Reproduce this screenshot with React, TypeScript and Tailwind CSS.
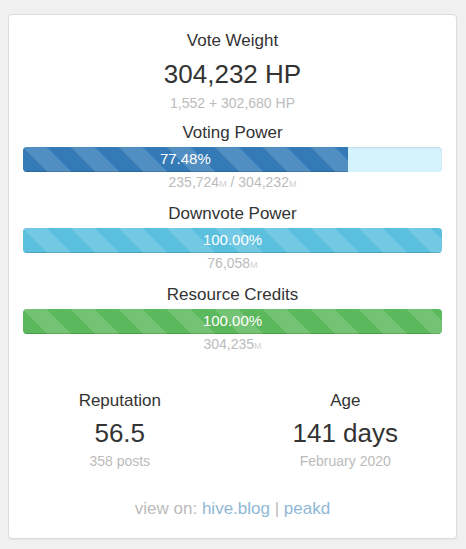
import React from "react";

const stripe =
  "linear-gradient(45deg, rgba(255,255,255,.15) 25%, transparent 25%, transparent 50%, rgba(255,255,255,.15) 50%, rgba(255,255,255,.15) 75%, transparent 75%, transparent)";

function Bar({ pct, label, color }: { pct: number; label: string; color: string }) {
  return (
    <div className="relative h-[25px] w-full overflow-hidden rounded-[4px] bg-[#d5f3fc] shadow-[inset_0_1px_2px_rgba(0,0,0,0.1)]">
      <div
        className={`flex h-full items-center justify-center text-[15px] text-white shadow-[inset_0_-1px_0_rgba(0,0,0,0.15)] ${color}`}
        style={{ width: `${pct}%`, backgroundImage: stripe, backgroundSize: "48px 48px" }}
      >
        {label}
      </div>
    </div>
  );
}

function M() {
  return <span className="text-[9px] text-[#cfcfcf]">M</span>;
}

function Section({
  title,
  pct,
  label,
  color,
  children,
}: {
  title: string;
  pct: number;
  label: string;
  color: string;
  children: React.ReactNode;
}) {
  return (
    <div className="flex flex-col items-center">
      <div className="h-[24px] text-[17px] leading-[24px] text-[#333]">{title}</div>
      <div className="mt-[2px] w-full">
        <Bar pct={pct} label={label} color={color} />
      </div>
      <div className="h-[20px] text-[14px] leading-[20px] text-[#bbb]">{children}</div>
    </div>
  );
}

export default function App() {
  return (
    <div
      className="min-h-[549px] w-[466px] bg-[#f0f0f0] pt-[14px]"
      style={{ fontFamily: '"Liberation Sans", Arial, Helvetica, sans-serif' }}
    >
      <div className="mx-[8px] h-[525px] w-[449px] rounded-[4px] border border-[#dcdcdc] bg-white px-[14px] pt-[14px] shadow-[0_1px_1px_rgba(0,0,0,0.05)]">
        <div className="flex flex-col items-center">
          <div className="h-[24px] text-[17px] leading-[24px] text-[#333]">Vote Weight</div>
          <div className="mt-[3px] h-[37px] text-[26px] leading-[37px] text-[#333]">304,232 HP</div>
          <div className="h-[20px] text-[14px] leading-[20px] text-[#bbb]">1,552 + 302,680 HP</div>
        </div>

        <div className="mt-[8px] flex flex-col gap-[10px]">
          <Section title="Voting Power" pct={77.48} label="77.48%" color="bg-[#337ab7]">
            235,724
            <M /> / 304,232
            <M />
          </Section>
          <Section title="Downvote Power" pct={100} label="100.00%" color="bg-[#5bc0de]">
            76,058
            <M />
          </Section>
          <Section title="Resource Credits" pct={100} label="100.00%" color="bg-[#5cb85c]">
            304,235
            <M />
          </Section>
        </div>

        <div className="mx-[-16px] mt-[35px] grid grid-cols-2">
          <div className="flex flex-col items-center">
            <div className="h-[24px] text-[17px] leading-[24px] text-[#333]">Reputation</div>
            <div className="mt-[2px] h-[36px] text-[26px] leading-[36px] text-[#333]">56.5</div>
            <div className="h-[20px] text-[14px] leading-[20px] text-[#bbb]">358 posts</div>
          </div>
          <div className="flex flex-col items-center">
            <div className="h-[24px] text-[17px] leading-[24px] text-[#333]">Age</div>
            <div className="mt-[2px] h-[36px] text-[26px] leading-[36px] text-[#333]">141 days</div>
            <div className="h-[20px] text-[14px] leading-[20px] text-[#bbb]">February 2020</div>
          </div>
        </div>

        <div className="mt-[26px] h-[24px] text-center text-[17px] leading-[24px] text-[#bbb]">
          view on: <span className="text-[#8fb8d6]">hive.blog</span> | <span className="text-[#8fb8d6]">peakd</span>
        </div>
      </div>
    </div>
  );
}
